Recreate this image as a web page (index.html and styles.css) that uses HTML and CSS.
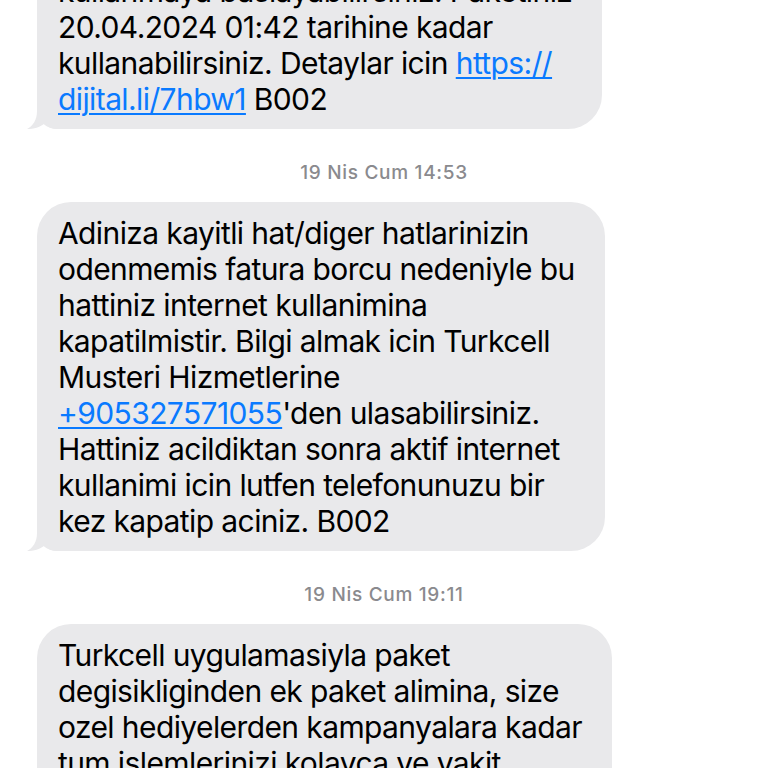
FILE: index.html
```html
<!DOCTYPE html>
<html lang="tr">
<head>
<meta charset="utf-8">
<title>Mesajlar</title>
<link rel="stylesheet" href="styles.css">
</head>
<body>
<main class="thread">
  <div class="msg">
    <div class="bubble">
      <svg class="tail" width="40" height="30" viewBox="0 0 40 30" aria-hidden="true"><path d="M10 0 L10 12 C10 21 6 27 0 30 C7 30 13 28 17 25 C21 28 26 30 32 30 L40 30 L40 0 Z"/></svg>
      <p class="text">Ek paketiniz tanimlanmistir ve<br>kullanmaya baslayabilirsiniz. Paketiniz<br>20.04.2024 01:42 tarihine kadar<br>kullanabilirsiniz. Detaylar icin <a class="link" href="#">https://<br>dijital.li/7hbw1</a> B002</p>
    </div>
  </div>

  <div class="stamp">19 Nis Cum 14:53</div>

  <div class="msg">
    <div class="bubble">
      <svg class="tail" width="40" height="30" viewBox="0 0 40 30" aria-hidden="true"><path d="M10 0 L10 12 C10 21 6 27 0 30 C7 30 13 28 17 25 C21 28 26 30 32 30 L40 30 L40 0 Z"/></svg>
      <p class="text">Adiniza kayitli hat/diger hatlarinizin<br>odenmemis fatura borcu nedeniyle bu<br>hattiniz internet kullanimina<br>kapatilmistir. Bilgi almak icin Turkcell<br>Musteri Hizmetlerine<br><a class="link" href="#">+905327571055</a>'den ulasabilirsiniz.<br>Hattiniz acildiktan sonra aktif internet<br>kullanimi icin lutfen telefonunuzu bir<br>kez kapatip aciniz. B002</p>
    </div>
  </div>

  <div class="stamp">19 Nis Cum 19:11</div>

  <div class="msg">
    <div class="bubble">
      <p class="text">Turkcell uygulamasiyla paket<br>degisikliginden ek paket alimina, size<br>ozel hediyelerden kampanyalara kadar<br>tum islemlerinizi kolayca ve vakit<br>kaybetmeden yapabilirsiniz.</p>
    </div>
  </div>
</main>
</body>
</html>
```

FILE: styles.css
```css
html, body {
  margin: 0;
  padding: 0;
  background: #ffffff;
}

body {
  width: 768px;
  height: 768px;
  overflow: hidden;
  font-family: "Inter", "Liberation Sans", sans-serif;
}

.thread {
  display: flex;
  flex-direction: column;
  align-items: flex-start;
  margin-top: -76px;
  padding-left: 37px;
}

.msg {
  display: flex;
}

.bubble {
  position: relative;
  width: fit-content;
  background: #e9e9eb;
  border-radius: 34px;
  border-bottom-left-radius: 20px;
  padding: 13px 30px 12px 21px;
}

.text {
  position: relative;
  z-index: 1;
  margin: 0;
  font-size: 30px;
  line-height: 36px;
  letter-spacing: -0.6px;
  color: #000000;
  white-space: nowrap;
}

.link {
  color: #0a7aff;
  text-decoration: underline;
  text-decoration-thickness: 2px;
  text-underline-offset: 3px;
}

.tail {
  position: absolute;
  left: -10px;
  bottom: 0;
  z-index: 0;
  fill: #e9e9eb;
}

.stamp {
  align-self: stretch;
  text-align: center;
  margin: 33px 0 18px -37px;
  font-size: 19px;
  font-weight: 500;
  line-height: 22px;
  color: #8a8a8e;
  letter-spacing: 0.7px;
}
```
